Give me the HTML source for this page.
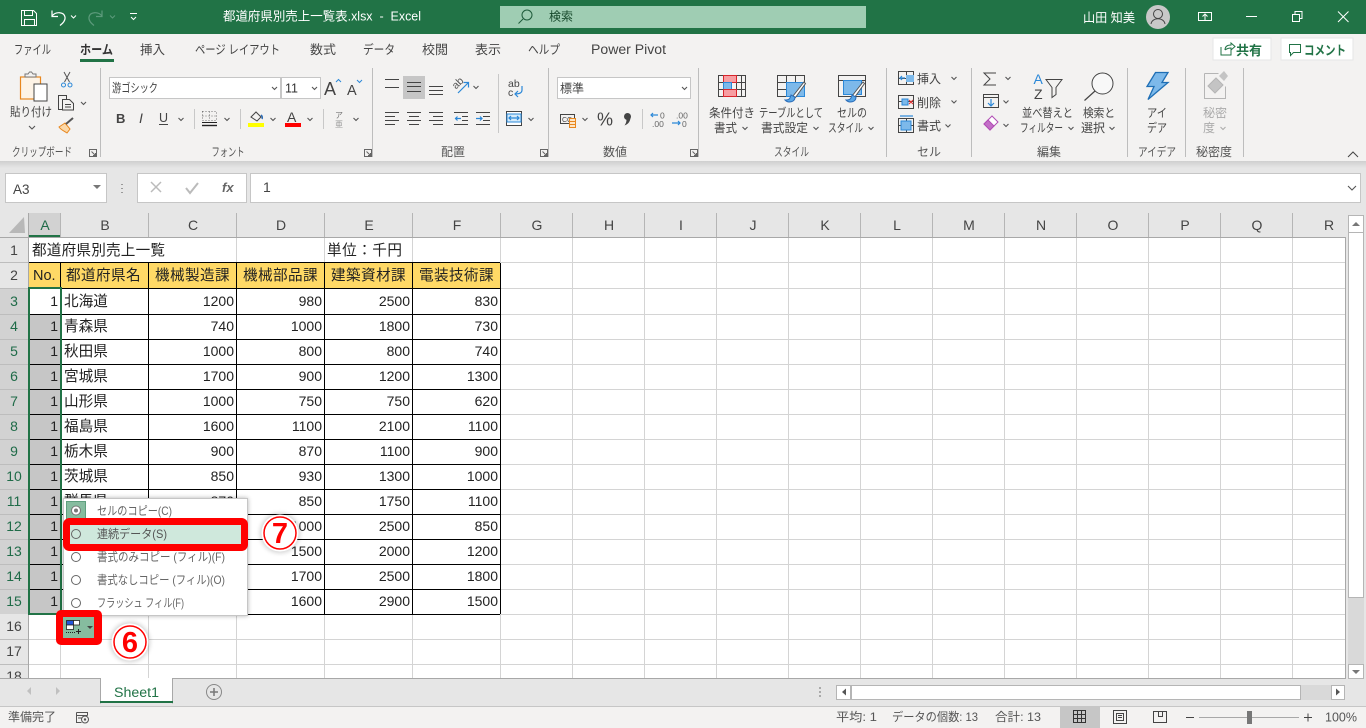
<!DOCTYPE html>
<html lang="ja"><head><meta charset="utf-8"><title>都道府県別売上一覧表.xlsx - Excel</title>
<style>
html,body{margin:0;padding:0;width:1366px;height:728px;overflow:hidden;background:#e6e6e6}
svg{display:block;position:absolute;left:0;top:0}
text{font-family:"Liberation Sans","Noto Sans CJK JP",sans-serif;white-space:pre}
.w{fill:#fff}.tab{font-size:12.500px;fill:#444}.rb{font-size:12px;fill:#444}.gl{font-size:12px;fill:#555}
.m{text-anchor:middle}.e{text-anchor:end}
.c{font-size:14.600px;fill:#222}.n{font-size:14px;fill:#222;text-anchor:end}
.h{font-size:14px;fill:#444;text-anchor:middle}.hs{font-size:14px;fill:#1f6b48;text-anchor:middle}
.p{font-size:12px;fill:#666}.st{font-size:12px;fill:#555}
.ic{fill:none;stroke:#444;stroke-width:1}.bl{fill:none;stroke:#2b88d8;stroke-width:1.200}
.ch{fill:none;stroke:#555;stroke-width:1.100}
</style></head><body>
<svg width="1366" height="728" viewBox="0 0 1366 728">
<defs><filter id="sh" x="-20%" y="-20%" width="140%" height="140%"><feGaussianBlur stdDeviation="2.500"/></filter>
<linearGradient id="rs" x1="0" y1="0" x2="0" y2="1"><stop offset="0" stop-color="#cfcfcf"/><stop offset="1" stop-color="#e6e6e6"/></linearGradient></defs>
<!-- backgrounds -->
<rect width="1366" height="728" fill="#e6e6e6"/>
<rect y="34" width="1366" height="127" fill="#f3f2f1"/>
<rect y="161" width="1366" height="7" fill="url(#rs)"/>
<rect width="1366" height="34" fill="#217346"/>
<!-- title bar -->
<g class="ic" style="stroke:#fff">
<path d="M21.500 10.500h12l3 3v12h-15zM24.500 10.500v5h8v-5M24.500 25.500v-6h10v6"/>
</g>
<path d="M52 10.500v6h6M52 16c4-5 12-4 13 1 .6 3.500-2 6-5 8.500" fill="none" stroke="#fff" stroke-width="1.200"/>
<path d="M71 15.500l2.500 2.500 2.500-2.500" fill="none" stroke="#fff"/>
<path d="M102 10.500v6h-6M102 16c-4-5-12-4-13 1-.6 3.500 2 6 5 8.500" fill="none" stroke="#5c9a7b" stroke-width="1.200"/>
<path d="M110 15.500l2.500 2.500 2.500-2.500" fill="none" stroke="#5c9a7b"/>
<path d="M130 13.500h7M131 17l2.500 2.500 2.500-2.500" fill="none" stroke="#fff"/>
<text x="223" y="20.500" class="w" font-size="12.500" textLength="198" lengthAdjust="spacingAndGlyphs">都道府県別売上一覧表.xlsx  -  Excel</text>
<rect x="500" y="6" width="366" height="22" fill="#9fcdb3"/>
<circle cx="527" cy="15" r="5" fill="none" stroke="#1d5a3a" stroke-width="1"/><path d="M523 19l-4.500 4.500" stroke="#1d5a3a"/>
<text x="549" y="20.500" font-size="12" fill="#17492c">検索</text>
<text x="1083" y="22" class="w" font-size="12.500" textLength="52" lengthAdjust="spacingAndGlyphs">山田 知美</text>
<circle cx="1158" cy="17" r="12" fill="#c8c8c8"/>
<circle cx="1158" cy="14" r="4.500" fill="none" stroke="#444"/><path d="M1151 24c1-7 13-7 14 0" fill="none" stroke="#444"/>
<path d="M1198.500 12.500h13v8h-13zM1205 20v-5M1202.500 16.500l2.500-2.500 2.500 2.500" fill="none" stroke="#fff"/>
<path d="M1246 16.500h11" stroke="#fff"/>
<path d="M1292.500 14.500h7v7h-7zM1295 14.500v-3h7v7h-2.500" fill="none" stroke="#fff"/>
<path d="M1338 11.500l10.500 10.500M1348.500 11.500l-10.500 10.500" stroke="#fff"/>
<!-- tabs -->
<g class="tab">
<text x="14" y="54" textLength="37" lengthAdjust="spacingAndGlyphs">ファイル</text>
<text x="80" y="54" textLength="33" lengthAdjust="spacingAndGlyphs" style="font-weight:700;fill:#333">ホーム</text>
<text x="140" y="54" textLength="25" lengthAdjust="spacingAndGlyphs">挿入</text>
<text x="195" y="54" textLength="85" lengthAdjust="spacingAndGlyphs">ページ レイアウト</text>
<text x="310" y="54" textLength="26" lengthAdjust="spacingAndGlyphs">数式</text>
<text x="363" y="54" textLength="32" lengthAdjust="spacingAndGlyphs">データ</text>
<text x="422" y="54" textLength="26" lengthAdjust="spacingAndGlyphs">校閲</text>
<text x="475" y="54" textLength="26" lengthAdjust="spacingAndGlyphs">表示</text>
<text x="528" y="54" textLength="32" lengthAdjust="spacingAndGlyphs">ヘルプ</text>
<text x="591" y="54" textLength="75" lengthAdjust="spacingAndGlyphs" style="font-size:13.500px">Power Pivot</text>
</g>
<rect x="80" y="59" width="34" height="3" fill="#217346"/>
<rect x="1213" y="38" width="58" height="22" fill="#fff" stroke="#e6e6e6"/>
<rect x="1281" y="38" width="72" height="22" fill="#fff" stroke="#e6e6e6"/>
<path d="M1221 47v8h10v-5M1225 50c0-4 3-5 6-5v-2l4 3.500-4 3.500v-2c-2 0-4 .5-6 2" fill="none" stroke="#217346"/>
<text x="1236" y="55" font-size="13" font-weight="700" fill="#217346">共有</text>
<path d="M1289.500 44.500h11v8h-7l-3 3v-3h-1z" fill="none" stroke="#217346"/>
<text x="1304" y="55" font-size="13" font-weight="700" fill="#217346" textLength="42" lengthAdjust="spacingAndGlyphs">コメント</text>
<!-- ribbon dividers -->
<path d="M100.500 68v89M372.500 68v89M548.500 68v89M698.500 68v89M886.500 68v89M971.500 68v89M1127.500 68v89M1185.500 68v89M1243.500 68v89" stroke="#bdbdbd"/>
<path d="M194.500 109v20M240.500 109v20M323.500 109v20M498.500 74v59M642.500 109v20" stroke="#c8c8c8"/>
<!-- clipboard -->
<rect x="20.500" y="77" width="20" height="22" fill="#fdf3e6" stroke="#e8871e" stroke-width="1.200"/>
<path d="M25 77v-3h3l1.500-2h2l1.500 2h3v3z" fill="#f3f2f1" stroke="#777"/>
<rect x="34" y="84" width="13" height="17" fill="#fff" stroke="#444"/>
<text x="31" y="116" class="rb m" textLength="42" lengthAdjust="spacingAndGlyphs">貼り付け</text>
<path class="ch" d="M29 126l3 3 3-3"/>
<path d="M64 72L69.500 82M70 72L64.500 82" stroke="#555" fill="none"/><circle cx="63.500" cy="85" r="2" fill="none" stroke="#2b88d8"/><circle cx="70" cy="85" r="2" fill="none" stroke="#2b88d8"/>
<path class="ic" d="M62.500 109.500h-4v-14h8v4"/><path class="ic" d="M62.500 99.500h7l4 4v6.500h-11zM65 104.500h6M65 107h6"/>
<path class="ch" d="M81 102l2.500 2.500 2.500-2.500"/>
<path d="M59 127l6-4 5 6-3 4c-3-2-6-3-8-6z" fill="#fbd8a8" stroke="#e8871e"/><path d="M66 124l7-6" stroke="#555" stroke-width="2"/>
<text x="12" y="156" class="gl" textLength="60" lengthAdjust="spacingAndGlyphs">クリップボード</text>
<g class="ic" style="stroke:#666" id="lc"><path d="M89.500 149.500h7v7h-7zM91.500 151.500l4 4M95.500 153v2.500h-2.500"/></g>
<!-- font -->
<rect x="109.500" y="77.500" width="171" height="21" fill="#fff" stroke="#c6c6c6"/>
<rect x="281.500" y="77.500" width="39" height="21" fill="#fff" stroke="#c6c6c6"/>
<text x="112" y="92" font-size="12" fill="#444" textLength="46" lengthAdjust="spacingAndGlyphs">游ゴシック</text>
<path class="ch" d="M272 87l2.500 2.500 2.500-2.500M312 87l2.500 2.500 2.500-2.500"/>
<text x="285" y="92.500" font-size="12.500" fill="#333">11</text>
<text x="324" y="95" font-size="18" fill="#444">A</text><path d="M336 82l2.500-2.500 2.500 2.500" fill="none" stroke="#2b88d8"/>
<text x="347" y="95" font-size="14.500" fill="#444">A</text><path d="M357 80l2.500 2.500 2.500-2.500" fill="none" stroke="#2b88d8"/>
<text x="116" y="123" font-size="13" font-weight="700" fill="#444">B</text>
<text x="139" y="123" font-size="14" font-style="italic" fill="#444" font-family="Liberation Serif">I</text>
<text x="159" y="122" font-size="12.500" fill="#444">U</text><path d="M159 124.500h9" stroke="#444"/>
<path class="ch" d="M178.500 118l2.500 2.500 2.500-2.500M224.500 118l2.500 2.500 2.500-2.500M270.500 118l2.500 2.500 2.500-2.500M307.500 118l2.500 2.500 2.500-2.500M353.500 118l2.500 2.500 2.500-2.500"/>
<path d="M202.500 111.500h14v9h-14zM209.500 111.500v9M202.500 116h14" fill="none" stroke="#777" stroke-dasharray="1 2"/>
<path d="M202 122.500h15" stroke="#222"/><path d="M202 125.500h15" stroke="#222" stroke-width="1.400"/>
<path d="M251 117l5-5 5 5-4 4z" fill="none" stroke="#444"/><path d="M261 115c1.500 1 1.500 3 1 4" fill="none" stroke="#2b6cb8" stroke-width="1.500"/>
<rect x="248" y="123" width="16" height="4" fill="#ffff00"/>
<text x="287" y="122" font-size="14" fill="#444">A</text><rect x="285" y="123" width="16" height="4" fill="#ff0000"/>
<text x="339" y="118" class="m" font-size="8" fill="#777">ア</text><text x="339" y="127" class="m" font-size="8" fill="#999">亜</text>
<text x="228" y="156" class="gl m" textLength="33" lengthAdjust="spacingAndGlyphs">フォント</text>
<use href="#lc" x="275"/>
<!-- alignment -->
<rect x="403" y="76" width="22" height="23" fill="#c6c6c6"/>
<path class="ic" d="M385 79.500h14M385 87.500h14M407 82.500h14M407 86.500h14M407 91.500h14M429 86.500h14M429 90.500h14M429 94.500h14"/>
<path class="ic" d="M385 112.500h14M385 116.500h10M385 120.500h14M385 124.500h10M407 112.500h14M409 116.500h10M407 120.500h14M409 124.500h10M429 112.500h14M433 116.500h10M429 120.500h14M433 124.500h10"/>
<text x="452" y="88" font-size="10.500" fill="#555" transform="rotate(-45 456 84)">ab</text>
<path class="bl" d="M458 93l10-10M463.500 82.500h5v5"/>
<path class="ch" d="M473.500 86l2.500 2.500 2.500-2.500"/>
<path class="bl" d="M461 118.500h-6M457.500 116.500l-2 2 2 2"/>
<path class="ic" d="M454 112.500h14M462 116.500h6M462 120.500h6M454 124.500h14"/>
<path class="ic" d="M476 112.500h14M483 116.500h7M483 120.500h7M476 124.500h14"/>
<path class="bl" d="M476 118.500h6M480 116.500l2 2-2 2"/>
<text x="508" y="87" font-size="10.500" fill="#444">ab</text><text x="508" y="96" font-size="10.500" fill="#444">c</text>
<path class="bl" d="M522 86v4c0 3-3 4-7 4M518 91l-3 3 3 3"/>
<rect x="506.500" y="111.500" width="15" height="14" fill="#fff" stroke="#444"/><rect x="507" y="114" width="14" height="8" fill="#d6ebfa" stroke="#2b88d8"/>
<path class="bl" d="M509 118h10M511 116l-2 2 2 2M517 116l2 2-2 2"/>
<path class="ch" d="M528.500 118l2.500 2.500 2.500-2.500"/>
<text x="453" y="156" class="gl m">配置</text>
<use href="#lc" x="451"/>
<!-- number -->
<rect x="557.500" y="77.500" width="133" height="21" fill="#fff" stroke="#c6c6c6"/>
<text x="560" y="92.500" font-size="12" fill="#444">標準</text>
<path class="ch" d="M682 87l2.500 2.500 2.500-2.500"/>
<path class="ic" d="M560.500 114.500h14v9h-14z"/><text x="562" y="122" font-size="7" fill="#444">CC</text>
<path d="M569.500 118.500h6v9h-6z" fill="#fde6c8" stroke="#e8871e"/><path d="M569.500 121.500h6M569.500 124.500h6" stroke="#e8871e"/>
<path class="ch" d="M582.500 118l2.500 2.500 2.500-2.500"/>
<text x="597" y="125.500" font-size="18" fill="#444">%</text>
<circle cx="627.500" cy="116.500" r="3.500" fill="#444"/><path d="M630.500 117c0 4-2 7-6 8.500 1.500-2 2-4 2-6z" fill="#444"/>
<path class="bl" d="M658 115h-7M653 113l-2 2 2 2"/>
<text x="660" y="118.500" font-size="8.500" fill="#666">0</text><text x="652" y="127" font-size="8.500" fill="#666">.00</text>
<text x="676" y="118.500" font-size="8.500" fill="#666">.00</text><path class="bl" d="M672 123h8M678 121l2 2-2 2"/><text x="682" y="127" font-size="8.500" fill="#666">0</text>
<text x="615" y="156" class="gl m">数値</text>
<use href="#lc" x="601"/>
<!-- styles -->
<g fill="none" stroke="#444">
<path d="M718.500 75.500h27v21h-27zM718.500 82.500h27M718.500 89.500h27M723.500 75.500v21M736.500 75.500v21M741.500 75.500v21"/>
</g>
<rect x="723.500" y="75.500" width="13" height="7" fill="#f79ea2" stroke="#d8252b"/>
<rect x="723.500" y="82.500" width="8" height="7" fill="#7db9ea" stroke="#2b88d8"/>
<rect x="723.500" y="89.500" width="13" height="7" fill="#f79ea2" stroke="#d8252b"/>
<g fill="none" stroke="#444"><path d="M777.500 75.500h27v21h-27zM777.500 82.500h27M777.500 89.500h27M786.500 75.500v21M795.500 75.500v21"/></g>
<rect x="786.500" y="82.500" width="18" height="14" fill="#7db9ea" stroke="#2b88d8"/>
<path d="M793 96l11-14 1.500 1.500-10 14z" fill="#fff" stroke="#555"/><path d="M785 100c4 0 5-1 6-5l4 2c0 3-2 5-6 5-2 0-3-1-4-2z" fill="#5aa7e6" stroke="#2b6cb8"/>
<g fill="none" stroke="#444"><path d="M838.500 75.500h27v21h-27z"/><path d="M838.500 80.500h27"/></g>
<rect x="843.500" y="80.500" width="18" height="14" fill="#7db9ea" stroke="#2b88d8"/>
<path d="M852 96l11-14 1.500 1.500-10 14z" fill="#fff" stroke="#555"/><path d="M846 100c4 0 5-1 6-5l4 2c0 3-2 5-6 5-2 0-3-1-4-2z" fill="#5aa7e6" stroke="#2b6cb8"/>
<g class="rb">
<text x="709" y="117" textLength="46" lengthAdjust="spacingAndGlyphs">条件付き</text>
<text x="714" y="132" textLength="23" lengthAdjust="spacingAndGlyphs">書式</text>
<text x="759" y="117" textLength="64" lengthAdjust="spacingAndGlyphs">テーブルとして</text>
<text x="761" y="132" textLength="47" lengthAdjust="spacingAndGlyphs">書式設定</text>
<text x="837" y="117" textLength="30" lengthAdjust="spacingAndGlyphs">セルの</text>
<text x="828" y="132" textLength="35" lengthAdjust="spacingAndGlyphs">スタイル</text>
</g>
<path class="ch" d="M742.500 127l2.500 2.500 2.500-2.500M813.500 127l2.500 2.500 2.500-2.500M868.500 127l2.500 2.500 2.500-2.500"/>
<text x="774" y="156" class="gl" textLength="35" lengthAdjust="spacingAndGlyphs">スタイル</text>
<!-- cells -->
<g fill="none" stroke="#444"><path d="M898.500 71.500h15v13h-15zM898.500 78.500h15M906.500 71.500v13"/>
<path d="M898.500 95.500h15v13h-15zM898.500 101.500h15"/>
<path d="M898.500 118.500h15v14h-15zM898.500 125.500h15M906.500 118.500v14"/></g>
<rect x="906" y="75" width="8" height="7" fill="#7db9ea"/><path class="bl" d="M905 78h-5M902 76l-2 2 2 2"/>
<rect x="902" y="99" width="6" height="6" fill="#7db9ea" stroke="#2b88d8"/><path d="M909 100l4 4M913 100l-4 4" stroke="#e03030"/>
<rect x="901" y="121" width="10" height="9" fill="#7db9ea" stroke="#2b88d8"/><path class="bl" d="M900 116h13"/>
<g class="rb"><text x="917" y="83">挿入</text><text x="917" y="107">削除</text><text x="917" y="130">書式</text></g>
<path class="ch" d="M951.500 77l2.500 2.500 2.500-2.500M951.500 100.500l2.500 2.500 2.500-2.500M945.500 124.500l2.500 2.500 2.500-2.500"/>
<text x="929" y="156" class="gl m">セル</text>
<!-- editing -->
<path d="M996 73h-12l6 6-6 6h12" fill="none" stroke="#444"/>
<path class="ch" d="M1005.500 77l2.500 2.500 2.500-2.500M1003.500 100.500l2.500 2.500 2.500-2.500M1003.500 124l2.500 2.500 2.500-2.500"/>
<path class="ic" d="M983.500 94.500h15v13h-15zM983.500 97.500h15"/><path class="bl" d="M991 99v7M988 103l3 3 3-3"/>
<path d="M984 124l8-8 6 6-8 8z" fill="#fff" stroke="#b14db5"/><path d="M984 124l4-4 6 6-4 4z" fill="#c36fc7" stroke="#b14db5"/>
<text x="1033.500" y="84" font-size="14" fill="#2b88d8">A</text><text x="1034" y="99" font-size="14" fill="#444">Z</text>
<path d="M1046 79.500h16l-6 8v7l-4 3v-10z" fill="none" stroke="#444"/>
<text x="1022" y="117" class="rb" textLength="51" lengthAdjust="spacingAndGlyphs">並べ替えと</text>
<text x="1020" y="132" class="rb" textLength="43" lengthAdjust="spacingAndGlyphs">フィルター</text>
<path class="ch" d="M1068.500 127l2.500 2.500 2.500-2.500"/>
<circle cx="1102.500" cy="83.500" r="10.500" fill="#f8f8f8" stroke="#444"/><path d="M1095 91l-10.500 9.500" stroke="#444" stroke-width="1.200"/>
<text x="1083" y="117" class="rb" textLength="32" lengthAdjust="spacingAndGlyphs">検索と</text>
<text x="1081" y="132" class="rb" textLength="24">選択</text>
<path class="ch" d="M1109.500 127l2.500 2.500 2.500-2.500"/>
<text x="1049" y="156" class="gl m">編集</text>
<!-- ideas -->
<path d="M1155.500 72.500h12.500l-6 10h6l-20 17 6-13h-7z" fill="#7db9ea" stroke="#1f6fb5" stroke-width="1.300"/>
<text x="1147" y="117" class="rb" textLength="20" lengthAdjust="spacingAndGlyphs">アイ</text><text x="1147" y="132" class="rb" textLength="20" lengthAdjust="spacingAndGlyphs">デア</text>
<text x="1138" y="156" class="gl" textLength="38" lengthAdjust="spacingAndGlyphs">アイデア</text>
<!-- sensitivity -->
<path d="M1204.500 73.500h14M1204.500 73.500v25h21v-12" fill="#f3f2f1" stroke="#b5b5b5"/>
<path d="M1208 86l8-8 7 7-8 8z" fill="#c4c4c4" stroke="#b5b5b5"/><path d="M1219 76l5-5 4 5-4 5z" fill="#c4c4c4"/>
<g fill="#aaa" font-size="12"><text x="1203" y="117">秘密</text><text x="1203" y="132">度</text></g>
<path d="M1220.500 127l2.500 2.500 2.500-2.500" fill="none" stroke="#aaa"/>
<text x="1196" y="156" class="gl">秘密度</text>
<path d="M1348 157l5-5 5 5" fill="none" stroke="#444"/>
<!-- formula bar -->
<rect x="5.500" y="173.500" width="101" height="29" fill="#fff" stroke="#c6c6c6"/>
<text x="13" y="194" font-size="13.500" fill="#444">A3</text>
<path d="M93 185h8l-4 4z" fill="#777"/>
<path d="M122 184v1M122 188v1M122 192v1" stroke="#999" stroke-width="2"/>
<rect x="137.500" y="173.500" width="109" height="29" fill="#fff" stroke="#c6c6c6"/>
<path d="M151 182l10 10M161 182l-10 10" stroke="#bbb" stroke-width="1.500"/>
<path d="M186 188l4 5 8-10" fill="none" stroke="#bbb" stroke-width="2"/>
<text x="222" y="192" font-size="13" font-style="italic" font-weight="700" fill="#666" font-family="Liberation Serif">fx</text>
<rect x="250.500" y="173.500" width="1110" height="29" fill="#fff" stroke="#c6c6c6"/>
<text x="263" y="192" font-size="14" fill="#444">1</text>
<path class="ch" d="M1348 186l4 4 4-4"/>
<!-- sheet -->
<rect x="29" y="238" width="1316" height="440" fill="#fff"/>
<path d="M60.500 238v440M148.500 238v440M236.500 238v440M324.500 238v440M412.500 238v440M500.500 238v440M572.500 238v440M644.500 238v440M716.500 238v440M788.500 238v440M860.500 238v440M932.500 238v440M1004.500 238v440M1076.500 238v440M1148.500 238v440M1220.500 238v440M1292.500 238v440" stroke="#d4d4d4"/>
<path d="M29 262.500h1316M29 288.500h1316M29 314.500h1316M29 339.500h1316M29 364.500h1316M29 389.500h1316M29 414.500h1316M29 439.500h1316M29 464.500h1316M29 489.500h1316M29 514.500h1316M29 539.500h1316M29 564.500h1316M29 589.500h1316M29 614.500h1316M29 639.500h1316M29 664.500h1316" stroke="#d4d4d4"/>
<rect x="29" y="238" width="207" height="24" fill="#fff"/>
<!-- headers -->
<rect x="29" y="213" width="31" height="24" fill="#d2d2d2"/>
<rect x="0" y="288" width="28" height="326" fill="#d2d2d2"/>
<path d="M25 233l-1-16-15 16z" fill="#b8b8b8"/>
<path d="M60.500 213v24M148.500 213v24M236.500 213v24M324.500 213v24M412.500 213v24M500.500 213v24M572.500 213v24M644.500 213v24M716.500 213v24M788.500 213v24M860.500 213v24M932.500 213v24M1004.500 213v24M1076.500 213v24M1148.500 213v24M1220.500 213v24M1292.500 213v24" stroke="#b5b5b5"/>
<path d="M0 262.500h28M0 288.500h28M0 639.500h28M0 664.500h28M0 314.500h28M0 339.500h28M0 364.500h28M0 389.500h28M0 414.500h28M0 439.500h28M0 464.500h28M0 489.500h28M0 514.500h28M0 539.500h28M0 564.500h28M0 589.500h28" stroke="#bdbdbd"/>
<rect x="0" y="237" width="1345" height="1" fill="#a8a8a8"/>
<rect x="28" y="213" width="1" height="465" fill="#a8a8a8"/>
<rect x="1345" y="237" width="1" height="441" fill="#a8a8a8"/>
<rect x="29" y="235" width="31" height="2" fill="#217346"/>
<g>
<text x="45" y="230" class="hs">A</text><text x="105" y="230" class="h">B</text><text x="193" y="230" class="h">C</text><text x="281" y="230" class="h">D</text><text x="369" y="230" class="h">E</text><text x="457" y="230" class="h">F</text><text x="537" y="230" class="h">G</text><text x="609" y="230" class="h">H</text><text x="681" y="230" class="h">I</text><text x="753" y="230" class="h">J</text><text x="825" y="230" class="h">K</text><text x="897" y="230" class="h">L</text><text x="969" y="230" class="h">M</text><text x="1041" y="230" class="h">N</text><text x="1113" y="230" class="h">O</text><text x="1185" y="230" class="h">P</text><text x="1257" y="230" class="h">Q</text><text x="1329" y="230" class="h">R</text>
<text x="14" y="255" class="h">1</text><text x="14" y="280" class="h">2</text>
<text x="14" y="306" class="hs">3</text><text x="14" y="331" class="hs">4</text><text x="14" y="356" class="hs">5</text><text x="14" y="381" class="hs">6</text><text x="14" y="406" class="hs">7</text><text x="14" y="431" class="hs">8</text><text x="14" y="456" class="hs">9</text><text x="14" y="481" class="hs">10</text><text x="14" y="506" class="hs">11</text><text x="14" y="531" class="hs">12</text><text x="14" y="556" class="hs">13</text><text x="14" y="581" class="hs">14</text><text x="14" y="606" class="hs">15</text>
<text x="14" y="631" class="h">16</text><text x="14" y="656" class="h">17</text><text x="14" y="681" class="h">18</text>
</g>
<rect x="0" y="678" width="1366" height="50" fill="#e6e6e6"/>
<!-- table fill & borders -->
<rect x="29" y="263" width="471" height="25" fill="#ffd966"/>
<rect x="30" y="315" width="30" height="299" fill="#c6c6c6"/>
<path d="M60.500 263v351M148.500 263v351M236.500 263v351M324.500 263v351M412.500 263v351M500.500 263v351M29 262.500h471M29 288.500h471M29 314.500h471M29 339.500h471M29 364.500h471M29 389.500h471M29 414.500h471M29 439.500h471M29 464.500h471M29 489.500h471M29 514.500h471M29 539.500h471M29 564.500h471M29 589.500h471M29 614.500h471" stroke="#000"/>
<!-- cell text -->
<text x="32" y="255" class="c" textLength="133">都道府県別売上一覧</text><text x="327" y="255" class="c" textLength="75">単位：千円</text>
<g class="c">
<text x="33" y="280" style="font-size:14.500px">No.</text><text x="66" y="280" letter-spacing=".4">都道府県名</text><text x="155" y="280" letter-spacing=".4">機械製造課</text><text x="243" y="280" letter-spacing=".4">機械部品課</text><text x="331" y="280" letter-spacing=".4">建築資材課</text><text x="419" y="280" letter-spacing=".4">電装技術課</text>
<text x="64" y="306">北海道</text><text x="64" y="331">青森県</text><text x="64" y="356">秋田県</text><text x="64" y="381">宮城県</text><text x="64" y="406">山形県</text><text x="64" y="431">福島県</text><text x="64" y="456">栃木県</text><text x="64" y="481">茨城県</text><text x="64" y="506">群馬県</text>
</g>
<g class="n">
<text x="58" y="306">1</text><text x="58" y="331">1</text><text x="58" y="356">1</text><text x="58" y="381">1</text><text x="58" y="406">1</text><text x="58" y="431">1</text><text x="58" y="456">1</text><text x="58" y="481">1</text><text x="58" y="506">1</text><text x="58" y="531">1</text><text x="58" y="556">1</text><text x="58" y="581">1</text><text x="58" y="606">1</text>
<text x="234" y="306">1200</text><text x="322" y="306">980</text><text x="410" y="306">2500</text><text x="498" y="306">830</text>
<text x="234" y="331">740</text><text x="322" y="331">1000</text><text x="410" y="331">1800</text><text x="498" y="331">730</text>
<text x="234" y="356">1000</text><text x="322" y="356">800</text><text x="410" y="356">800</text><text x="498" y="356">740</text>
<text x="234" y="381">1700</text><text x="322" y="381">900</text><text x="410" y="381">1200</text><text x="498" y="381">1300</text>
<text x="234" y="406">1000</text><text x="322" y="406">750</text><text x="410" y="406">750</text><text x="498" y="406">620</text>
<text x="234" y="431">1600</text><text x="322" y="431">1100</text><text x="410" y="431">2100</text><text x="498" y="431">1100</text>
<text x="234" y="456">900</text><text x="322" y="456">870</text><text x="410" y="456">1100</text><text x="498" y="456">900</text>
<text x="234" y="481">850</text><text x="322" y="481">930</text><text x="410" y="481">1300</text><text x="498" y="481">1000</text>
<text x="234" y="506">870</text><text x="322" y="506">850</text><text x="410" y="506">1750</text><text x="498" y="506">1100</text>
<text x="322" y="531">1000</text><text x="410" y="531">2500</text><text x="498" y="531">850</text>
<text x="322" y="556">1500</text><text x="410" y="556">2000</text><text x="498" y="556">1200</text>
<text x="322" y="581">1700</text><text x="410" y="581">2500</text><text x="498" y="581">1800</text>
<text x="322" y="606">1600</text><text x="410" y="606">2900</text><text x="498" y="606">1500</text>
</g>
<!-- selection -->
<rect x="29" y="288" width="32" height="326" fill="none" stroke="#217346" stroke-width="2"/>
<!-- popup -->
<rect x="63" y="498" width="185" height="118" fill="#000" opacity=".3" filter="url(#sh)"/>
<rect x="63.500" y="498.500" width="184" height="117" fill="#fff" stroke="#c6c6c6"/>
<rect x="66.500" y="501.500" width="19" height="19" fill="#86bc9f" stroke="#5f9f7e"/>
<rect x="70" y="523" width="174" height="23" fill="#cfe8dc"/>
<circle cx="76" cy="510.500" r="4.500" fill="#fff" stroke="#777"/><circle cx="76" cy="510.500" r="2" fill="#777"/>
<circle cx="76" cy="534" r="4.500" fill="none" stroke="#666"/><circle cx="76" cy="557" r="4.500" fill="none" stroke="#666"/><circle cx="76" cy="580" r="4.500" fill="none" stroke="#666"/><circle cx="76" cy="603" r="4.500" fill="none" stroke="#666"/>
<g class="p">
<text x="97" y="515" textLength="75" lengthAdjust="spacingAndGlyphs">セルのコピー(C)</text>
<text x="97" y="538" textLength="70" lengthAdjust="spacingAndGlyphs" style="fill:#555">連続データ(S)</text>
<text x="97" y="561" textLength="128" lengthAdjust="spacingAndGlyphs">書式のみコピー (フィル)(F)</text>
<text x="97" y="584" textLength="128" lengthAdjust="spacingAndGlyphs">書式なしコピー (フィル)(O)</text>
<text x="97" y="607" textLength="87" lengthAdjust="spacingAndGlyphs">フラッシュ フィル(F)</text>
</g>
<!-- callouts -->
<rect x="66.500" y="521.500" width="178" height="26" rx="3" fill="none" stroke="#ff0000" stroke-width="7"/>
<rect x="56" y="610" width="46" height="35" rx="5" fill="#ff0000"/>
<rect x="63" y="617" width="31" height="21" fill="#86bc9f"/>
<rect x="66.500" y="620.500" width="7" height="4.500" fill="#2255dd" stroke="#222" stroke-width=".8"/><rect x="73.500" y="620.500" width="6" height="4.500" fill="#fff" stroke="#222" stroke-width=".8"/><rect x="66.500" y="625" width="7" height="4.500" fill="#fff" stroke="#222" stroke-width=".8"/>
<path d="M66 632.500h9" stroke="#222" stroke-dasharray="1 1"/><path d="M76 631.500h5M78.500 629v5" stroke="#222"/>
<path d="M87 626h6l-3 3z" fill="#444"/>
<circle cx="130" cy="642" r="20" fill="#000" opacity=".18" filter="url(#sh)"/>
<circle cx="130" cy="642" r="18.500" fill="#fff"/><circle cx="130" cy="642" r="16" fill="#fff" stroke="#ff0000" stroke-width="1.500"/>
<text x="130" y="652" class="m" font-size="29" font-weight="700" fill="#ff0000">6</text>
<circle cx="280" cy="533" r="20" fill="#000" opacity=".18" filter="url(#sh)"/>
<circle cx="280" cy="533" r="18.500" fill="#fff"/><circle cx="280" cy="533" r="16" fill="#fff" stroke="#ff0000" stroke-width="1.500"/>
<text x="280" y="543" class="m" font-size="29" font-weight="700" fill="#ff0000">7</text>
<!-- vertical scrollbar -->
<rect x="1346" y="213" width="20" height="465" fill="#e6e6e6"/>
<rect x="1348" y="598" width="16" height="66" fill="#d9d9d9"/>
<rect x="1348.500" y="232.500" width="15" height="365" fill="#fff" stroke="#b5b5b5"/>
<rect x="1348.500" y="215.500" width="15" height="17" fill="#fff" stroke="#b5b5b5"/>
<path d="M1352 226h8l-4-4z" fill="#777"/>
<rect x="1348.500" y="664.500" width="15" height="14" fill="#fff" stroke="#b5b5b5"/>
<path d="M1352 670h8l-4 4z" fill="#777"/>
<!-- tab bar -->
<rect x="0" y="678" width="1346" height="1" fill="#a8a8a8"/>
<rect x="0" y="706" width="1366" height="1" fill="#c6c6c6"/>
<path d="M31 687v8l-4-4zM56 687v8l4-4z" fill="#c0c0c0"/>
<path d="M100.500 678.500v25M172.500 678.500v25" stroke="#a8a8a8"/>
<rect x="101" y="678" width="71" height="24" fill="#fff"/>
<rect x="100" y="701" width="73" height="2" fill="#217346"/>
<text x="114" y="697" font-size="13.500" fill="#217346" textLength="45" lengthAdjust="spacingAndGlyphs">Sheet1</text>
<circle cx="214" cy="692" r="7.500" fill="none" stroke="#888"/><path d="M210 692h8M214 688v8" stroke="#777" stroke-width="1.500"/>
<path d="M820 687v2M820 691v2M820 695v2" stroke="#aaa" stroke-width="2"/>
<rect x="836.500" y="685.500" width="14" height="14" fill="#fff" stroke="#b5b5b5"/>
<path d="M846 688.500v7l-4-3.500z" fill="#555"/>
<rect x="851.500" y="685.500" width="449" height="14" fill="#fff" stroke="#b5b5b5"/>
<rect x="1301" y="685" width="30" height="15" fill="#d9d9d9"/>
<rect x="1331.500" y="685.500" width="13" height="14" fill="#fff" stroke="#b5b5b5"/>
<path d="M1336 688.500v7l4-3.500z" fill="#555"/>
<!-- status bar -->
<rect x="0" y="707" width="1366" height="21" fill="#f3f2f1"/>
<text x="8" y="721" class="st" textLength="48">準備完了</text>
<path d="M76.500 712.500h11v3M76.500 712.500v10h5M76.500 715.500h11M78 718h4" fill="none" stroke="#555"/><circle cx="85" cy="719.500" r="3.500" fill="none" stroke="#555"/><circle cx="85" cy="719.500" r="1.200" fill="#555"/>
<text x="836" y="721" class="st" textLength="41" lengthAdjust="spacingAndGlyphs">平均: 1</text>
<text x="892" y="721" class="st" textLength="86" lengthAdjust="spacingAndGlyphs">データの個数: 13</text>
<text x="995" y="721" class="st" textLength="46" lengthAdjust="spacingAndGlyphs">合計: 13</text>
<rect x="1060" y="707" width="40" height="21" fill="#c6c6c6"/>
<path d="M1073.500 710.500h12v12h-12zM1077.500 710.500v12M1081.500 710.500v12M1073.500 714.500h12M1073.500 718.500h12" fill="none" stroke="#333"/>
<path d="M1113.500 710.500h13v13h-13zM1116.500 713.500h7v7h-7zM1118 715.500h4M1118 717.500h4" fill="none" stroke="#444"/>
<path d="M1153.500 711.500h13v11h-13zM1158.500 711.500v5h4v-5" fill="none" stroke="#444"/>
<path d="M1186 717.500h8M1304 717.500h8M1308 713.500v8" stroke="#444"/>
<path d="M1199 717.500h100" stroke="#a8a8a8"/>
<rect x="1247" y="711" width="5" height="13" fill="#777"/>
<text x="1325" y="721.500" font-size="12.500" fill="#555">100%</text>
</svg>
</body></html>
